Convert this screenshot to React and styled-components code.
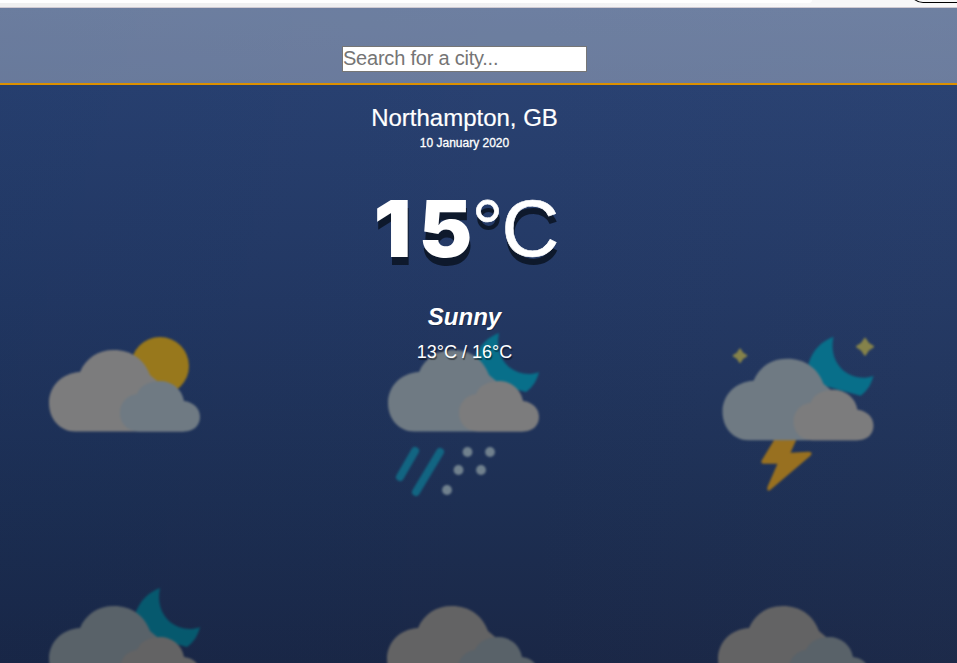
import React from "react";
import styled, { createGlobalStyle } from "styled-components";

const GlobalStyle = createGlobalStyle`
  * { box-sizing: border-box; }
  body { margin: 0; overflow: hidden; font-family: "Liberation Sans", Arial, sans-serif; }
`;

const Page = styled.div`
  height: 663px;
  display: flex;
  flex-direction: column;
  overflow: hidden;
`;

const BrowserEdge = styled.div`
  flex: none;
  display: flex;
  justify-content: space-between;
  height: 8px;
  background: linear-gradient(90deg, #f0f0f0 0%, #f0f0f2 50%, #f7f7f8 85%);
  border-bottom: 1px solid #cfcad2;
`;

const AddressBar = styled.div`
  width: 812px;
  height: 3px;
  background: #fff;
  border-bottom-right-radius: 3px;
`;

const PillEdge = styled.svg`
  width: 45px;
  height: 4px;
`;

const Weather = styled.main`
  position: relative;
  flex: 1;
  color: #fff;
  background:
    linear-gradient(90deg, rgba(0, 30, 75, 0.08), transparent 55%, rgba(70, 90, 130, 0.06)),
    linear-gradient(180deg, #2c4677 0%, #294171 12%, #233863 45%, #1d2f53 75%, #1a2746 100%);
`;

const Backdrop = styled.div`
  position: absolute;
  inset: 0;
  overflow: hidden;
  padding-top: 313px;
  display: grid;
  grid-template-columns: 339px 334px 284px;
  grid-auto-rows: 256px;
`;

const WeatherIcon = styled.svg`
  width: 190px;
  height: 190px;
  margin-left: ${(p) => p.$left}px;
  filter: blur(1px) brightness(${(p) => p.$dim});
`;

const Foreground = styled.div`
  position: relative;
`;

const SearchBar = styled.header`
  display: flex;
  justify-content: center;
  height: 77px;
  padding: 38px 28px 0 0;
  background: rgba(255, 255, 255, 0.31);
  background-clip: padding-box;
  border-bottom: 2px solid #dc9000;
`;

const SearchInput = styled.input`
  width: 245px;
  height: 26px;
  padding: 0 0 2px;
  border: 1px solid #767676;
  border-radius: 0;
  font: 20px "Liberation Sans", Arial, sans-serif;
  letter-spacing: -0.22px;
  &::placeholder { color: #757575; }
`;

const Report = styled.section`
  display: flex;
  flex-direction: column;
  align-items: center;
  padding: 18px 28px 0 0;
`;

const Place = styled.h1`
  margin: 0;
  font-size: 24px;
  font-weight: 400;
  line-height: 30px;
  -webkit-text-stroke: 0.2px #fff;
`;

const DateLine = styled.div`
  font-size: 12px;
  line-height: 14px;
  margin-top: 3px;
  -webkit-text-stroke: 0.3px #fff;
`;

const Temperature = styled.div`
  display: flex;
  margin-top: 33px;
  padding-right: 2px;
  font-size: 80px;
  line-height: 92px;
  text-shadow: 1px 8px #0e192c;
`;

const Digits = styled.span`
  display: flex;
  gap: 4.5px;
`;

const Digit = styled.span`
  width: 49px;
  font-family: Inter, "Liberation Sans", sans-serif;
  font-size: 78px;
  font-weight: 900;
  display: flex;
  justify-content: center;
  transform: scaleX(${(p) => p.$stretch});
`;

const Unit = styled.span`
  margin-left: 1.5px;
  -webkit-text-stroke: 0.6px #fff;
`;

const Degree = styled.span`
  letter-spacing: -2px;
`;

const Condition = styled.div`
  margin-top: 28px;
  font-size: 24px;
  font-weight: 700;
  font-style: italic;
  line-height: 28px;
  text-shadow: 1px 1px rgba(0, 0, 0, 0.25);
`;

const Range = styled.div`
  margin-top: 11px;
  font-size: 18px;
  line-height: 20px;
  text-shadow: 1px 2px 1px rgba(0, 0, 0, 0.45);
`;

const PALE = "#7c7c7d";
const BLUISH = "#6f7a83";

function Cloud({ back, front }) {
  return (
    <>
      <path fill={back} d="M45 110.5C30 110.5 19 98 19 82C19 65 32 52 50 51C56 37 68 29 84 29C101 29 114 38 120 54L145 75L154 110.5Z" />
      <path fill={front} d="M109 110.5C97 110.5 90 102 90 92C90 81 98 74 107 73C110 65 119 60 130 60C142 60 152 68 154 80C163 81 170 87 170 96C170 105 163 110.5 154 110.5Z" />
    </>
  );
}

const Moon = () => (
  <path fill="#086f8a" d="M130 12C119 16 109 25 105 39L121 61L157 71C164 66 168 59 170 51C160 55 149 53 140 46C131 38 127 26 130 12Z" />
);

const Sparkle = ({ x, y, r }) => (
  <path
    fill="#85824a"
    transform={`translate(${x} ${y}) scale(${r})`}
    d="M0-1L.4-.4L1 0L.4.4L0 1L-.4.4L-1 0L-.4-.4Z"
    stroke="#85824a"
    strokeWidth=".25"
    strokeLinejoin="round"
  />
);

function Icon({ kind, dim = 1, left = 30 }) {
  const night = kind === "rain" || kind === "storm" || kind === "night";
  return (
    <WeatherIcon $dim={dim} $left={left} viewBox="0 0 190 190" aria-hidden="true">
      {kind === "storm" ? (
        <g transform="translate(0.5 8.7)">
          <path fill="#987020" d="M75 103L58 131Q57 134 60 134H74L64 157Q63 163 67 160L107 126Q110 122 105 122L87 123L96 103Z" />
          <g transform="translate(0 -5)"><Moon /></g>
          <Cloud back={BLUISH} front={PALE} />
          <Sparkle x={36.5} y={26} r={6.5} />
          <Sparkle x={161.5} y={17} r={8} />
        </g>
      ) : (
        <>
          {kind === "sun" && <circle cx="130" cy="45" r="29" fill="#98781c" />}
          {night && <g transform={kind === "night" ? "translate(0 -1)" : undefined}><Moon /></g>}
          <Cloud back={night ? BLUISH : PALE} front={night ? PALE : BLUISH} />
        </>
      )}
      {kind === "rain" && (
        <>
          <path d="M46 130L31 156M71 131L47 171" stroke="#126582" strokeWidth="8" strokeLinecap="round" />
          <g fill="#71818e">
            <circle cx="98.5" cy="131" r="4.9" />
            <circle cx="121" cy="131" r="4.9" />
            <circle cx="89.5" cy="149" r="4.9" />
            <circle cx="112" cy="149" r="4.9" />
            <circle cx="78" cy="169" r="4.9" />
          </g>
        </>
      )}
    </WeatherIcon>
  );
}

export default function App() {
  return (
    <>
      <GlobalStyle />
      <Page>
        <BrowserEdge>
          <AddressBar />
          <PillEdge viewBox="0 0 45 4" aria-hidden="true">
            <path d="M2-1Q6 2.5 11 2.5H45" fill="none" stroke="#000" strokeWidth="1.1" />
          </PillEdge>
        </BrowserEdge>
        <Weather>
          <Backdrop>
            <Icon kind="sun" />
            <Icon kind="rain" />
            <Icon kind="storm" />
            <Icon kind="night" dim={0.8} />
            <Icon kind="cloud" dim={0.8} left={29} />
            <Icon kind="cloud" dim={0.8} left={26} />
          </Backdrop>
          <Foreground>
            <SearchBar>
              <SearchInput type="text" placeholder="Search for a city..." />
            </SearchBar>
            <Report>
              <Place>Northampton, GB</Place>
              <DateLine>10 January 2020</DateLine>
              <Temperature>
                <Digits>
                  <Digit $stretch={1.08}>1</Digit>
                  <Digit $stretch={1.03}>5</Digit>
                </Digits>
                <Unit><Degree>°</Degree>C</Unit>
              </Temperature>
              <Condition>Sunny</Condition>
              <Range>13°C / 16°C</Range>
            </Report>
          </Foreground>
        </Weather>
      </Page>
    </>
  );
}
